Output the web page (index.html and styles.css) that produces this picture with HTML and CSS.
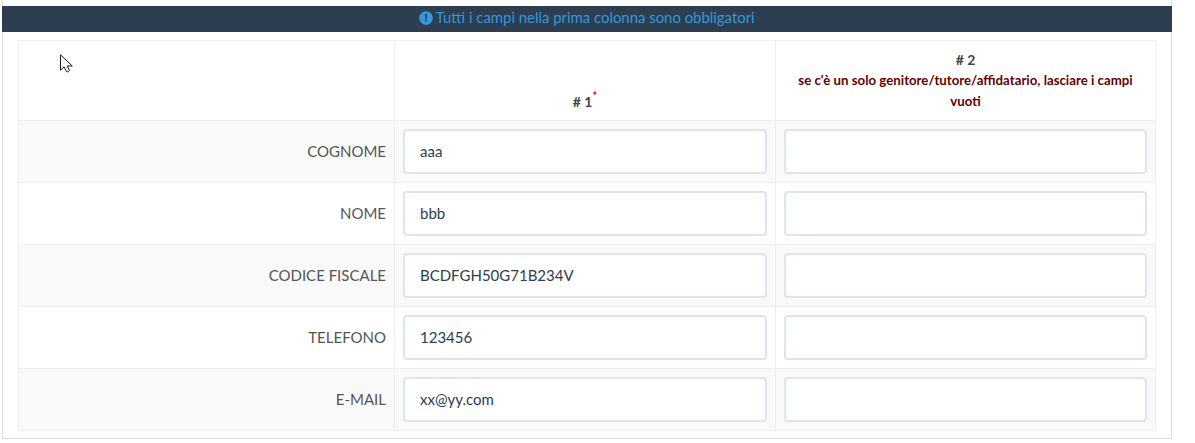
FILE: index.html
```html
<!DOCTYPE html>
<html lang="it">
<head>
<meta charset="utf-8">
<title>Genitori</title>
<link rel="stylesheet" href="styles.css">
</head>
<body>
<div class="panel">
  <div class="heading">
    <svg class="info-icon" viewBox="0 0 512 512" aria-hidden="true"><path d="M256 8C119 8 8 119 8 256s111 248 248 248 248-111 248-248S393 8 256 8zm0 382a40 40 0 1 1 0-80 40 40 0 0 1 0 80zm38-266-13 158c-1 7-6 12-13 12h-24c-7 0-12-5-13-12l-13-158c-1-8 5-14 13-14h50c8 0 14 6 13 14z"/></svg>
    <span>Tutti i campi nella prima colonna sono obbligatori</span>
  </div>
  <div class="body">
    <table class="grid">
      <colgroup><col class="col-label"><col class="col-a"><col class="col-b"></colgroup>
      <thead>
        <tr>
          <th></th>
          <th># 1<sup class="req">*</sup></th>
          <th># 2<div class="note">se c'è un solo genitore/tutore/affidatario, lasciare i campi vuoti</div></th>
        </tr>
      </thead>
      <tbody>
        <tr><td class="label">COGNOME</td><td><input class="field" value="aaa"></td><td><input class="field"></td></tr>
        <tr><td class="label">NOME</td><td><input class="field" value="bbb"></td><td><input class="field"></td></tr>
        <tr><td class="label">CODICE FISCALE</td><td><input class="field" value="BCDFGH50G71B234V"></td><td><input class="field"></td></tr>
        <tr><td class="label">TELEFONO</td><td><input class="field" value="123456"></td><td><input class="field"></td></tr>
        <tr><td class="label">E-MAIL</td><td><input class="field" value="xx@yy.com"></td><td><input class="field"></td></tr>
      </tbody>
    </table>
  </div>
</div>
<svg class="cursor" viewBox="0 0 13 20" aria-hidden="true"><path d="M.5.8v15.4l3.6-3.4 2.2 4.6c.6 1.2 3.6 0 3-1.4L7.2 12h5.1z" fill="#fff" stroke="#1a1a22" stroke-width="1"/></svg>
</body>
</html>
```
FILE: styles.css
```css
* { box-sizing: border-box; }
html, body { margin: 0; background: #fff; }
body {
  padding: 0 0 0 2px;
  height: 443px;
  overflow: hidden;
  font-family: Lato, "Liberation Sans", sans-serif;
  font-size: 15px;
  color: #555;
}
.panel {
  width: 1170px;
  height: 439px;
  border: 1px solid #ddd;
  border-top: 0;
  padding-top: 6px;
}
.heading {
  height: 26px;
  margin: 0 0 8px -1px;
  width: 1170px;
  background: #2c3e50;
  color: #3498db;
  font-size: 14.9px;
  line-height: 22px;
  text-align: center;
}
.info-icon {
  width: 14px;
  height: 14px;
  fill: #3498db;
  vertical-align: -1.5px;
  margin-right: -1px;
}
.body { padding: 0 15px; }
.grid {
  width: 1137px;
  table-layout: fixed;
  border-collapse: collapse;
  background: #fff;
}
.col-label { width: 376px; }
.col-a { width: 381px; }
.col-b { width: 380px; }
.grid th, .grid td { border: 1px solid #eee; padding: 8px; }
.grid th {
  height: 80px;
  padding-bottom: 8px;
  vertical-align: bottom;
  text-align: center;
  font-size: 14px;
  font-weight: 700;
  line-height: 21px;
  color: #444;
}
.note {
  font-size: 13.25px;
  font-weight: 700;
  color: #600;
  line-height: 21px;
}
.req {
  color: #e00;
  font-size: 11px;
  line-height: 0;
  vertical-align: 7px;
}
.grid td { height: 62px; vertical-align: middle; }
.grid tbody tr:nth-child(odd) { background: #f9f9f9; }
.grid .label { text-align: right; color: #555; font-size: 15px; padding-top: 7px; padding-bottom: 9px; }
.field {
  display: block;
  width: 100%;
  height: 45px;
  border: 2px solid #dce4ec;
  border-radius: 4px;
  background: #fff;
  padding: 9px 15px 11px;
  font: 15px Lato, "Liberation Sans", sans-serif;
  color: #2c3e50;
  outline: 0;
}
.cursor {
  position: absolute;
  left: 60px;
  top: 54px;
  width: 13px;
  height: 20px;
}
```
